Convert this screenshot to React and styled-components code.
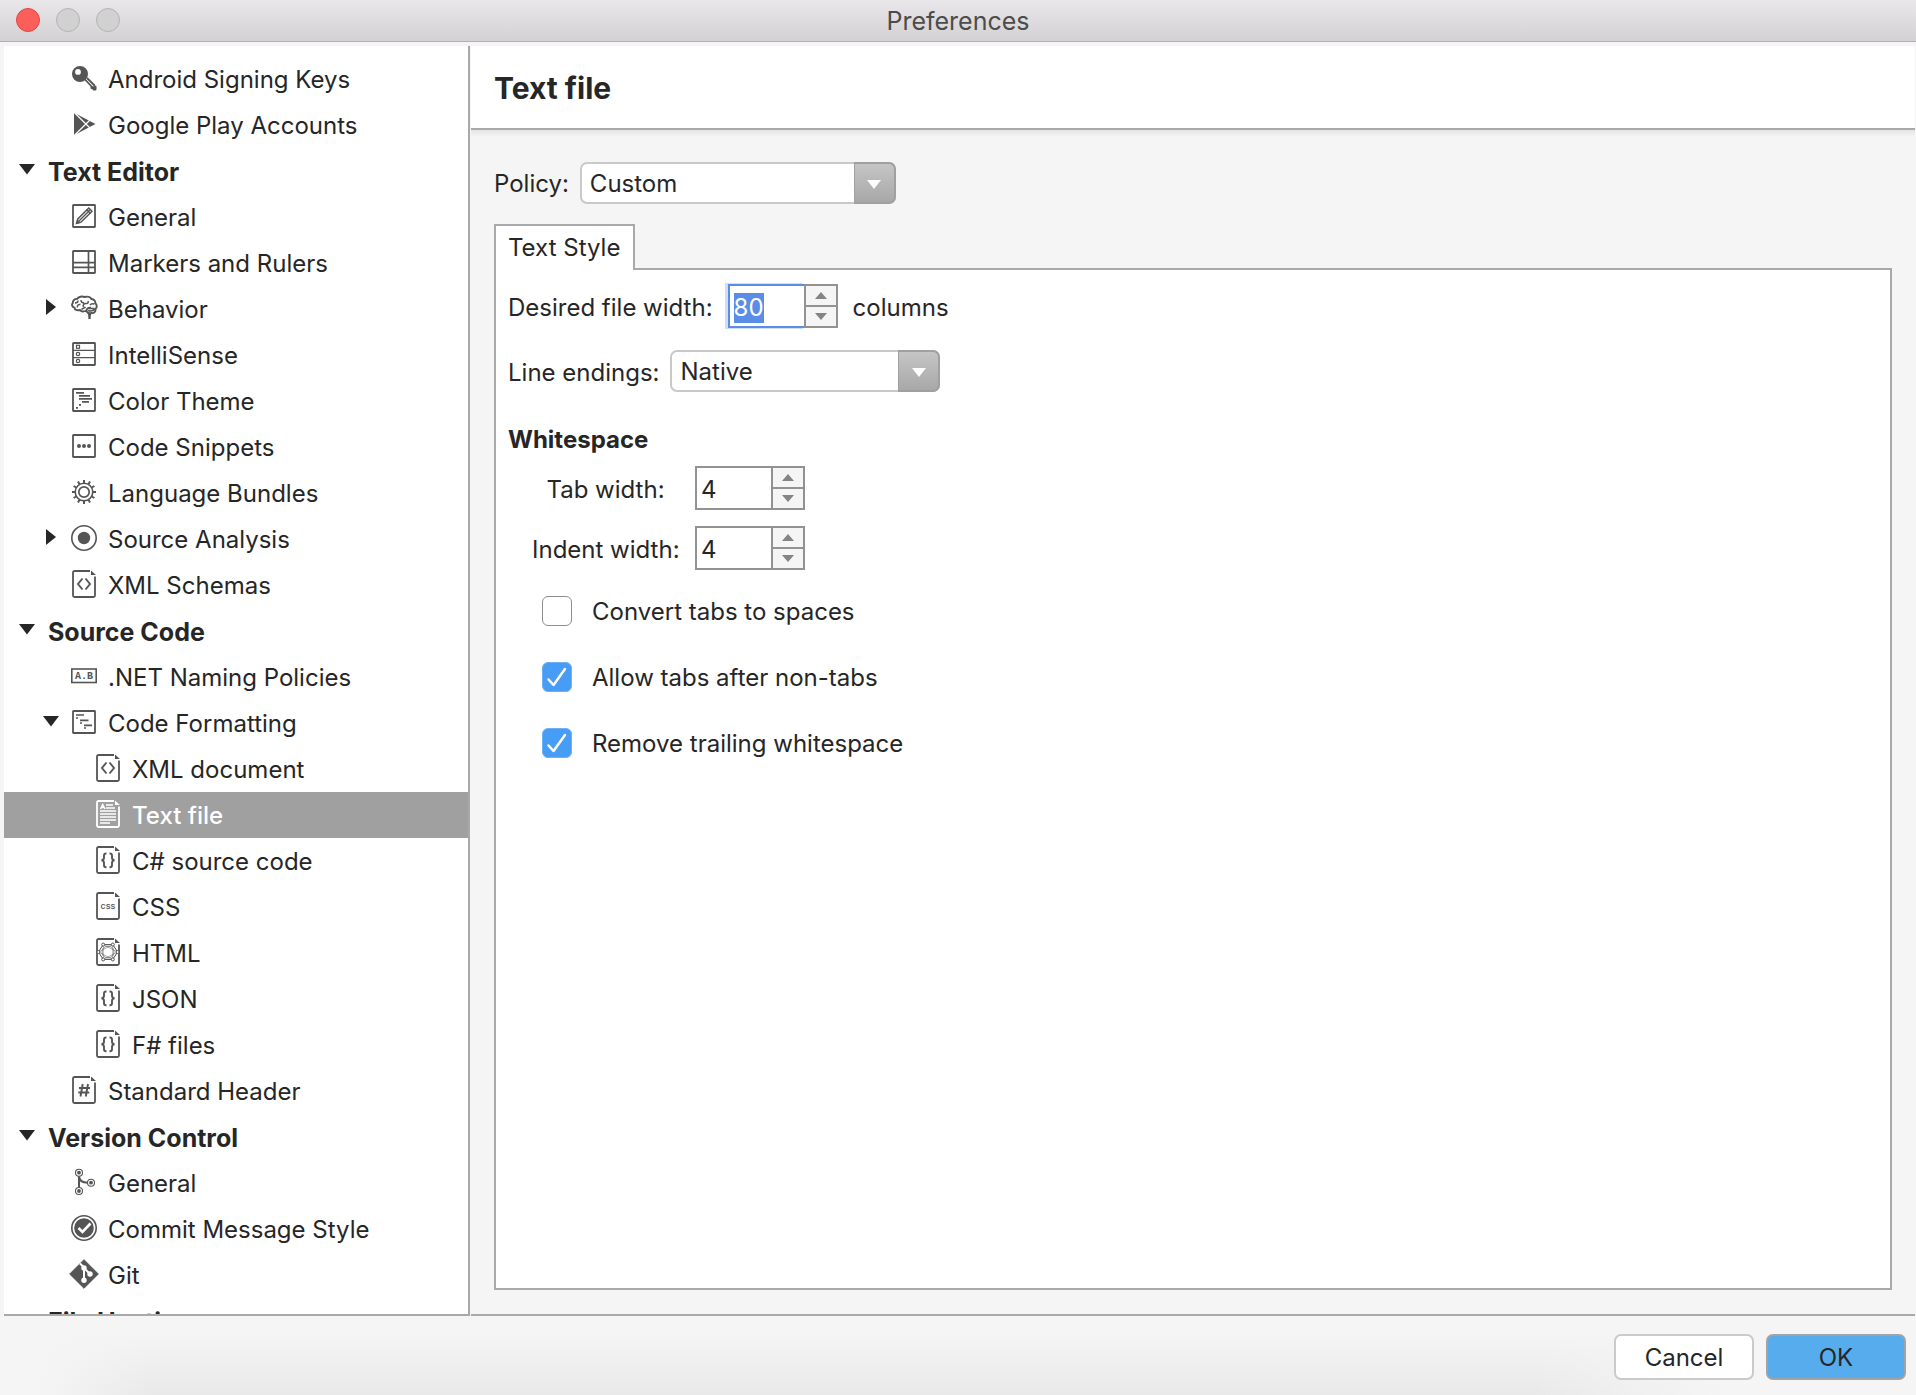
import React, { useEffect, useRef, useState } from 'react'
import styled, { createGlobalStyle } from 'styled-components'

const GlobalStyle = createGlobalStyle`
  * {
    box-sizing: border-box;
  }
  body {
    margin: 0;
    background: #f5f5f5;
    color: #262626;
    font-family: Inter, 'Liberation Sans', sans-serif;
    font-size: 24px;
    line-height: 30px;
  }
  button, input, select {
    margin: 0;
    font: inherit;
    color: inherit;
  }
`

/* ---------- icons ---------- */

const Box = () => <rect x="1" y="1" width="22" height="22" rx="0.5" strokeWidth="1.8" />

const Page = ({ children }) => (
  <g transform="translate(0 -2)">
    <path
      d="M18 1H2.5A1.5 1.5 0 0 0 1 2.5v23A1.5 1.5 0 0 0 2.5 27h19a1.5 1.5 0 0 0 1.5-1.5V6.5"
      strokeWidth="1.8"
    />
    <path d="M19 .5V5h5z" fill="currentColor" stroke="none" />
    {children}
  </g>
)

const hexNodes = [0, 60, 120, 180, 240, 300].map((deg) => {
  const a = (deg * Math.PI) / 180
  return [12 + 9.6 * Math.cos(a), 14 + 8.6 * Math.sin(a)]
})

const icons = {
  key: (
    <>
      <path
        d="M8 0a8 8 0 1 0 0 16A8 8 0 0 0 8 0ZM6 3a2.9 2.9 0 1 1 0 5.8A2.9 2.9 0 0 1 6 3Z"
        fill="currentColor"
        fillRule="evenodd"
        stroke="none"
      />
      <path d="M12 12.5 21.5 22.5M15 12l8 8" strokeWidth="1.8" />
      <path d="M19 20.5v2h2V24h3v-4" fill="currentColor" strokeWidth="1" />
    </>
  ),
  play: (
    <>
      <path d="M2 .8 23.5 12 2 23.2Z" fill="currentColor" stroke="none" />
      <path d="M2.5.8 18.5 16.5M2.5 23.2 18.5 7.5" stroke="#fff" strokeWidth="1.2" />
    </>
  ),
  pencil: (
    <>
      <Box />
      <path d="M4.5 19.5 5.8 15 16.8 4 20 7.2 9 18.2Z" strokeWidth="1.5" />
      <path d="M7 17 18 6M14.5 5.5l4 4" strokeWidth="1.4" />
      <path d="M4.5 19.5 5.5 16 8 18.5Z" fill="currentColor" />
    </>
  ),
  rulers: (
    <>
      <Box />
      <path d="M16.5 1v22M1 12.7h22M1 17.3h22" strokeWidth="1.7" />
    </>
  ),
  brain: (
    <>
      <path
        strokeWidth="1.9"
        d="M14.5 14.5c-3 1.5-5.500 1-6.5-.5-3 .8-5.500-.2-5.500-2.300C0 11-.7 8.500.8 7 .5 4.500 2.800 2.700 5 2.900 6.500.6 10 0 12.500 1c3-1 6 0 7 2 2.500.3 4.200 2.200 3.800 4.300 2 1.500 1.800 4.500.2 5.500.5 2.500-1.500 4.700-4 4.200-2.500.8-5-.5-5-2.500 0-2 2-3.200 4.500-2.700"
      />
      <path
        strokeWidth="1.5"
        d="M3 7c2 0 3-1 3-2.5M5.5 11.5C5 9.5 6.500 8 8.500 8.500M9 4c0 2 1 3 3 2.500M11.500 11c-1-2 .5-4 3-3.500 1.500 0 2-1 1.500-2.500M9.500 13.500c1-1.500 3-1 4-2.500M18 9c1-1.500 3-1.500 4.500-1M16 14.500c2.500 1 5 .5 7-1.500M16.500 12.500h6"
      />
      <path d="M14.5 16.5c1.5.8 2 2.500 1.800 6.500h2.400c0-2.500 0-4 .8-6z" fill="currentColor" stroke="none" />
    </>
  ),
  list: (
    <>
      <Box />
      <path d="M1 8.3h22M1 15.7h22" strokeWidth="1.2" />
      <rect x="4.5" y="3.3" width="3" height="3" strokeWidth="1.2" />
      <circle cx="6" cy="12" r="1.7" strokeWidth="1.2" />
      <circle cx="6" cy="19" r="1.7" strokeWidth="1.2" />
    </>
  ),
  theme: (
    <>
      <Box />
      <path d="M4 4.8h8M7 7.8h11M7 10.8h13M10 13.8h7M7 16.8h2M4 19.8h2" strokeWidth="1.7" />
    </>
  ),
  snippets: (
    <>
      <Box />
      <g fill="currentColor" stroke="none">
        <circle cx="7" cy="12" r="2" />
        <circle cx="12" cy="12" r="2" />
        <circle cx="17" cy="12" r="2" />
      </g>
    </>
  ),
  gear: (
    <>
      <circle cx="12" cy="12" r="8.8" strokeWidth="1.6" />
      <circle cx="12" cy="12" r="5.2" strokeWidth="1.7" />
      {[0, 30, 60, 90, 120, 150, 180, 210, 240, 270, 300, 330].map((deg) => (
        <path key={deg} d="M12 0v3" strokeWidth="2" transform={`rotate(${deg} 12 12)`} />
      ))}
    </>
  ),
  target: (
    <>
      <circle cx="12" cy="12" r="12.2" strokeWidth="1.6" />
      <circle cx="12" cy="12" r="6.2" fill="currentColor" stroke="none" />
    </>
  ),
  angles: (
    <Page>
      <path strokeWidth="1.9" d="M10.5 8.5 6 14l4.5 5.5M13.5 8.5 18 14l-4.5 5.5" />
    </Page>
  ),
  braces: (
    <Page>
      <path
        strokeWidth="1.9"
        d="M10.5 7.5H10Q8 7.5 8 9.5v2.3Q8 14 5.5 14.3 8 14.6 8 17v2.3q0 2 2 2h.5M13.5 7.5h.5q2 0 2 2v2.3q0 2.2 2.5 2.5-2.5.3-2.5 2.700v2.3q0 2-2 2h-.5"
      />
    </Page>
  ),
  naming: (
    <>
      <rect x="-.2" y="5" width="24.4" height="13.5" strokeWidth="1.6" />
      <text
        x="12"
        y="15.3"
        fontSize="10"
        fontWeight="700"
        textAnchor="middle"
        fill="currentColor"
        stroke="none"
        fontFamily="Liberation Mono, monospace"
      >
        A.B
      </text>
    </>
  ),
  formatting: (
    <>
      <Box />
      <path d="M4 5h8M4 8h2M8 10.3h8.5M8 13h2M12 15.3h8M12 18h2" strokeWidth="1.7" />
    </>
  ),
  text: (
    <Page>
      <path d="M10 5h7M10 8h9M4 11h16M4 14h16M4 17h16M4 20h16M4 23h10" strokeWidth="1.4" />
      <path d="M4.5 9 6.7 4.5 9 9M5.3 7.5h2.9" strokeWidth="1.4" />
    </Page>
  ),
  css: (
    <Page>
      <text x="12" y="16.5" fontSize="9" fontWeight="500" textAnchor="middle" fill="currentColor" stroke="none">
        css
      </text>
    </Page>
  ),
  html: (
    <Page>
      <polygon points={hexNodes.map((p) => p.join(',')).join(' ')} strokeWidth="1" />
      <circle cx="12" cy="14" r="6" strokeWidth=".6" />
      <path
        strokeWidth=".5"
        d={[0, 1, 2, 3, 4, 5]
          .map((i) => `M${hexNodes[i].join(' ')}L${hexNodes[(i + 2) % 6].join(' ')}`)
          .join('')}
      />
      {hexNodes.map(([x, y], i) => (
        <circle key={i} cx={x} cy={y} r="1.5" fill="#fff" strokeWidth="1" />
      ))}
    </Page>
  ),
  hash: (
    <Page>
      <path d="M10.7 8 8.5 20.5M16 8l-2.2 12.5M7 12h11M6.3 16.5h11" strokeWidth="1.9" />
    </Page>
  ),
  branch: (
    <>
      <path d="M7 6v12M7 6c0 4.5 3 6.7 9 6.7" strokeWidth="2" />
      {[[7, 2.7], [7, 21], [19, 12.7]].map(([x, y]) => (
        <g key={`${x}-${y}`}>
          <circle cx={x} cy={y} r="3.5" fill="#fff" strokeWidth="1.1" />
          <circle cx={x} cy={y} r="1.9" fill="currentColor" stroke="none" />
        </g>
      ))}
    </>
  ),
  commit: (
    <>
      <circle cx="12" cy="12" r="12.2" strokeWidth="1.6" />
      <circle cx="12" cy="12" r="9.8" fill="currentColor" stroke="none" />
      <path d="M6.5 12 10.5 16 18.5 7.5" stroke="#fff" strokeWidth="2.6" />
    </>
  ),
  git: (
    <>
      <path
        d="M12-2.3 26.3 12 12 26.3-2.3 12Z"
        fill="currentColor"
        strokeWidth="1"
        strokeLinejoin="round"
      />
      <path d="M8 1.5 12 5.5v13M12 6l6 6" stroke="#fff" strokeWidth="2" />
      <g fill="#fff" stroke="none">
        <circle cx="12" cy="6" r="2.7" />
        <circle cx="18" cy="12" r="2.7" />
        <circle cx="12" cy="18.3" r="2.7" />
      </g>
    </>
  ),
}

const Icon = ({ name }) => (
  <StyledIcon viewBox="0 0 24 24" aria-hidden="true">
    {icons[name]}
  </StyledIcon>
)

/* ---------- sidebar ---------- */

const tree = [
  { level: 1, icon: 'key', label: 'Android Signing Keys' },
  { level: 1, icon: 'play', label: 'Google Play Accounts' },
  { level: 0, arrow: 'down', label: 'Text Editor' },
  { level: 1, icon: 'pencil', label: 'General' },
  { level: 1, icon: 'rulers', label: 'Markers and Rulers' },
  { level: 1, icon: 'brain', arrow: 'right', label: 'Behavior' },
  { level: 1, icon: 'list', label: 'IntelliSense' },
  { level: 1, icon: 'theme', label: 'Color Theme' },
  { level: 1, icon: 'snippets', label: 'Code Snippets' },
  { level: 1, icon: 'gear', label: 'Language Bundles' },
  { level: 1, icon: 'target', arrow: 'right', label: 'Source Analysis' },
  { level: 1, icon: 'angles', label: 'XML Schemas' },
  { level: 0, arrow: 'down', label: 'Source Code' },
  { level: 1, icon: 'naming', label: '.NET Naming Policies' },
  { level: 1, icon: 'formatting', arrow: 'down', label: 'Code Formatting' },
  { level: 2, icon: 'angles', label: 'XML document' },
  { level: 2, icon: 'text', label: 'Text file', selected: true },
  { level: 2, icon: 'braces', label: 'C# source code' },
  { level: 2, icon: 'css', label: 'CSS' },
  { level: 2, icon: 'html', label: 'HTML' },
  { level: 2, icon: 'braces', label: 'JSON' },
  { level: 2, icon: 'braces', label: 'F# files' },
  { level: 1, icon: 'hash', label: 'Standard Header' },
  { level: 0, arrow: 'down', label: 'Version Control' },
  { level: 1, icon: 'branch', label: 'General' },
  { level: 1, icon: 'commit', label: 'Commit Message Style' },
  { level: 1, icon: 'git', label: 'Git' },
  { level: 0, label: 'File Hosting' },
]

const arrows = {
  down: 'M0 3h16L8 13.500z',
  right: 'M3 0v16l10-8z',
}

const TreeItem = ({ level, icon, arrow, label, selected }) => (
  <TreeRow role="treeitem" aria-level={level + 1} aria-selected={!!selected} $level={level} $selected={selected}>
    <ArrowSlot>
      {arrow && (
        <svg width="16" height="16" viewBox="0 0 16 16" aria-hidden="true">
          <path d={arrows[arrow]} fill="currentColor" />
        </svg>
      )}
    </ArrowSlot>
    {icon && (
      <IconSlot $selected={selected}>
        <Icon name={icon} />
      </IconSlot>
    )}
    <TreeLabel $heading={level === 0} $selected={selected}>
      {label}
    </TreeLabel>
  </TreeRow>
)

/* ---------- form parts ---------- */

const Combo = ({ id, width, options }) => (
  <StyledCombo $width={width}>
    <select id={id}>
      {options.map((o) => (
        <option key={o}>{o}</option>
      ))}
    </select>
    <span className="arrow">
      <svg width="14" height="9" viewBox="0 0 14 9" aria-hidden="true">
        <path d="M0 0h14L7 9z" fill="#fff" />
      </svg>
    </span>
  </StyledCombo>
)

const Spinner = ({ id, initial, focused }) => {
  const [value, setValue] = useState(initial)
  const ref = useRef(null)

  useEffect(() => {
    if (focused) {
      ref.current.focus()
      ref.current.select()
    }
  }, [focused])

  return (
    <StyledSpinner>
      <input id={id} ref={ref} inputMode="numeric" value={value} onChange={(e) => setValue(e.target.value)} />
      <div className="steps">
        <button type="button" aria-label="Increase" onClick={() => setValue(Number(value) + 1)}>
          <svg width="12" height="7" viewBox="0 0 12 7">
            <path d="M0 7h12L6 0z" fill="#848484" />
          </svg>
        </button>
        <button type="button" aria-label="Decrease" onClick={() => setValue(Number(value) - 1)}>
          <svg width="12" height="7" viewBox="0 0 12 7">
            <path d="M0 0h12L6 7z" fill="#848484" />
          </svg>
        </button>
      </div>
    </StyledSpinner>
  )
}

const Check = ({ label, checked }) => (
  <StyledCheck>
    <span className="box">
      <input type="checkbox" defaultChecked={checked} />
      <svg width="30" height="30" viewBox="0 0 30 30" aria-hidden="true">
        <path d="M6.5 17.5 11.5 23 23 7" />
      </svg>
    </span>
    <span className="text">{label}</span>
  </StyledCheck>
)

const App = () => {
  return (
    <Window>
      <GlobalStyle />
      <TitleBar>
        <Lights>
          <Light aria-label="Close" $color="#fc5f5a" $edge="#e2474a" />
          <Light aria-label="Minimize" $color="#d0d1d0" $edge="#b3b4b3" />
          <Light aria-label="Zoom" $color="#d0d1d0" $edge="#b3b4b3" />
        </Lights>
        <WindowTitle>Preferences</WindowTitle>
      </TitleBar>
      <Body>
        <Sidebar role="tree" aria-label="Preferences">
          {tree.map((item, i) => (
            <TreeItem key={i} {...item} />
          ))}
        </Sidebar>
        <Main>
          <Header>
            <h2>Text file</h2>
          </Header>
          <Content>
            <Policy>
              <label htmlFor="policy">Policy:</label>
              <Combo id="policy" width={316} options={['Custom', 'Default']} />
            </Policy>
            <TabBar role="tablist">
              <Tab type="button" role="tab" aria-selected="true">
                Text Style
              </Tab>
            </TabBar>
            <Panel role="tabpanel">
              <Field $gap={15}>
                <label htmlFor="file-width">Desired file width:</label>
                <Spinner id="file-width" initial="80" focused />
                <span>columns</span>
              </Field>
              <Field $gap={11}>
                <label htmlFor="endings">Line endings:</label>
                <Combo id="endings" width={270} options={['Native', 'Unix', 'Windows']} />
              </Field>
              <Group>
                <h3>Whitespace</h3>
                <WidthGrid>
                  <label htmlFor="tab-width">Tab width:</label>
                  <Spinner id="tab-width" initial="4" />
                  <label htmlFor="indent-width">Indent width:</label>
                  <Spinner id="indent-width" initial="4" />
                </WidthGrid>
                <Checks>
                  <Check label="Convert tabs to spaces" />
                  <Check label="Allow tabs after non-tabs" checked />
                  <Check label="Remove trailing whitespace" checked />
                </Checks>
              </Group>
            </Panel>
          </Content>
        </Main>
      </Body>
      <Footer>
        <FooterButton type="button">Cancel</FooterButton>
        <FooterButton type="button" $primary>
          OK
        </FooterButton>
      </Footer>
    </Window>
  )
}

const Window = styled.div`
  height: 100vh;
  display: flex;
  flex-direction: column;
  overflow: hidden;
`

const TitleBar = styled.header`
  height: 42px;
  flex: none;
  display: grid;
  grid-template-columns: 1fr auto 1fr;
  align-items: center;
  padding: 0 16px 2px;
  background: linear-gradient(#e9e7e9, #d3d1d3);
  border-bottom: 1px solid #b1b0b1;
`

const Lights = styled.div`
  display: flex;
  gap: 16px;
`

const Light = styled.button`
  width: 24px;
  height: 24px;
  padding: 0;
  border: 1px solid ${({ $edge }) => $edge};
  border-radius: 50%;
  background: ${({ $color }) => $color};
`

const WindowTitle = styled.h1`
  margin: 0;
  padding-top: 2px;
  font-size: 25px;
  font-weight: 400;
  line-height: 30px;
  color: #4c4c4c;
`

const Body = styled.div`
  flex: 1;
  min-height: 0;
  display: flex;
  gap: 1px;
  padding: 4px 1px 0 4px;
`

const Sidebar = styled.nav`
  width: 466px;
  flex: none;
  padding-top: 10px;
  overflow: hidden;
  background: #fff;
  border-right: 2px solid #a9a9a9;
  border-bottom: 2px solid #a9a9a9;
`

const TreeRow = styled.div`
  height: 46px;
  display: flex;
  align-items: center;
  padding-left: ${({ $level }) => 15 + $level * 24}px;
  background: ${({ $selected }) => ($selected ? '#a0a0a0' : 'transparent')};
  color: ${({ $selected }) => ($selected ? '#fff' : '#262626')};
  white-space: nowrap;
`

const ArrowSlot = styled.span`
  width: 26px;
  height: 16px;
  margin-bottom: 4px;
  flex: none;
  line-height: 0;
`

const IconSlot = styled.span`
  width: 30px;
  height: 24px;
  margin-bottom: 2px;
  flex: none;
  display: flex;
  justify-content: center;
  color: ${({ $selected }) => ($selected ? '#fff' : '#555')};
`

const StyledIcon = styled.svg`
  width: 24px;
  height: 24px;
  overflow: visible;
  fill: none;
  stroke: currentColor;
`

const TreeLabel = styled.span`
  padding-top: 2px;
  padding-left: ${({ $heading }) => ($heading ? 3 : 9)}px;
  font-size: ${({ $heading }) => ($heading ? 25 : 24)}px;
  font-weight: ${({ $heading, $selected }) => ($heading ? 700 : $selected ? 500 : 400)};
`

const Main = styled.main`
  flex: 1;
  min-width: 0;
  display: flex;
  flex-direction: column;
  border-bottom: 2px solid #a9a9a9;
`

const Header = styled.div`
  height: 84px;
  flex: none;
  display: flex;
  align-items: center;
  padding: 2px 0 0 23px;
  background: #fff;
  border-bottom: 2px solid #a9a9a9;
  h2 {
    margin: 0;
    font-size: 30px;
    line-height: 36px;
  }
`

const Content = styled.div`
  flex: 1;
  min-height: 0;
  display: flex;
  flex-direction: column;
  padding: 32px 23px 24px;
  background: linear-gradient(#e4e4e4, #f5f5f5 7px);
`

const Policy = styled.div`
  display: flex;
  align-items: center;
  gap: 11px;
  margin-bottom: 20px;
  label {
    padding-top: 2px;
  }
`

const StyledCombo = styled.div`
  display: grid;
  width: ${({ $width }) => $width}px;
  height: 42px;
  select {
    grid-area: 1 / 1;
    padding: 2px 50px 0 8px;
    appearance: none;
    background: #fff;
    border: 2px solid #c9c9c9;
    border-radius: 7px;
    outline: none;
  }
  .arrow {
    grid-area: 1 / 1;
    justify-self: end;
    width: 42px;
    display: flex;
    align-items: center;
    justify-content: center;
    padding-top: 2px;
    background: linear-gradient(#c5c5c5, #a8a8a8);
    border: 2px solid #a0a0a0;
    border-left-width: 1px;
    border-radius: 0 7px 7px 0;
    pointer-events: none;
  }
`

const TabBar = styled.div`
  display: flex;
  z-index: 1;
  margin-bottom: -2px;
`

const Tab = styled.button`
  height: 46px;
  padding: 0 13px 0 12px;
  background: #fff;
  border: 2px solid #a9a9a9;
  border-bottom: none;
`

const Panel = styled.section`
  flex: 1;
  padding: 14px 12px;
  background: #fff;
  border: 2px solid #a9a9a9;
`

const Field = styled.div`
  display: flex;
  align-items: center;
  gap: ${({ $gap }) => $gap}px;
  margin-bottom: 22px;
  label, > span {
    padding-top: 3px;
  }
`

const StyledSpinner = styled.div`
  width: 110px;
  height: 44px;
  display: flex;
  input {
    width: 76px;
    padding: 3px 4px 0;
    border: 2px solid #929292;
    border-right: none;
    outline: none;
    background: #fff;
  }
  input:focus {
    border-color: #5a8ee6;
    box-shadow: -2px 0 0 1px #cfdef7;
  }
  input::selection {
    background: #5a8ee6;
    color: #fff;
  }
  .steps {
    flex: 1;
    display: flex;
    flex-direction: column;
    border: 2px solid #929292;
  }
  button {
    flex: 1;
    display: flex;
    align-items: center;
    justify-content: center;
    padding: 0;
    border: none;
    background: #f5f5f5;
  }
  button + button {
    border-top: 2px solid #929292;
  }
`

const Group = styled.div`
  padding-top: 11px;
  h3 {
    margin: 0 0 11px;
    font-size: 24px;
    line-height: 30px;
  }
`

const WidthGrid = styled.div`
  display: grid;
  grid-template-columns: 147px 110px;
  align-items: center;
  gap: 16px;
  padding-left: 24px;
  label {
    padding-top: 3px;
    text-align: center;
    white-space: nowrap;
  }
`

const Checks = styled.div`
  display: flex;
  flex-direction: column;
  align-items: flex-start;
  gap: 36px;
  padding: 26px 0 0 34px;
`

const StyledCheck = styled.label`
  display: flex;
  align-items: center;
  gap: 20px;
  height: 30px;
  .box {
    display: grid;
    width: 30px;
    height: 30px;
  }
  .text {
    padding-top: 2px;
  }
  input {
    grid-area: 1 / 1;
    appearance: none;
    background: #fff;
    border: 1px solid #8e8e8e;
    border-radius: 6px;
  }
  input:checked {
    background: #479cf5;
    border-color: #6db0f7;
  }
  svg {
    grid-area: 1 / 1;
    fill: none;
    stroke: none;
    stroke-width: 2.5;
    stroke-linecap: round;
    stroke-linejoin: round;
    pointer-events: none;
  }
  input:checked + svg {
    stroke: #fff;
  }
`

const Footer = styled.footer`
  flex: none;
  display: flex;
  justify-content: flex-end;
  gap: 12px;
  padding: 18px 10px 15px;
  background:
    linear-gradient(90deg, #f5f5f5 2%, transparent 8%, transparent 80%, #f5f5f5 90%),
    linear-gradient(#f5f5f5 20%, #e9e9e9);
`

const FooterButton = styled.button`
  width: 140px;
  height: 46px;
  padding: 2px 0 0;
  background: ${({ $primary }) => ($primary ? '#57acee' : '#fff')};
  border: 2px solid ${({ $primary }) => ($primary ? '#a3a3a3' : '#cacaca')};
  border-radius: 7px;
`

export default App
